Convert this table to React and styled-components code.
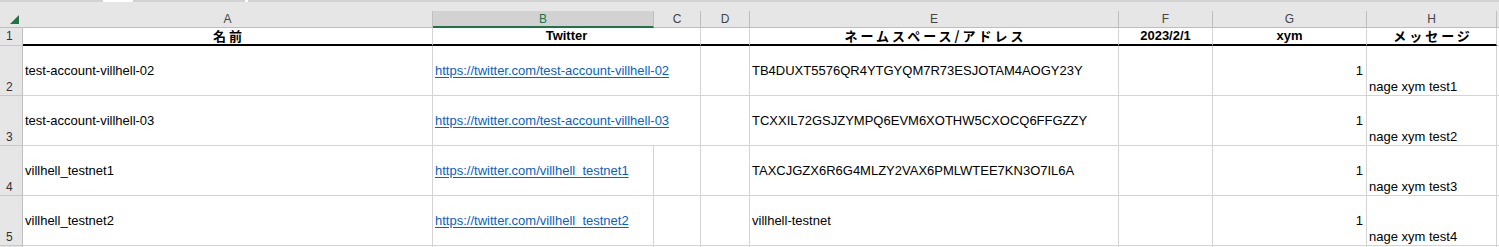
import React from "react";
import styled, { createGlobalStyle } from "styled-components";

const GlobalStyle = createGlobalStyle`
  html, body {
    margin: 0;
    padding: 0;
    background: #ffffff;
    overflow: hidden;
  }
  body {
    font-family: "Liberation Sans", Arial, "Noto Sans CJK JP", sans-serif;
  }
`;

const COLS = "23px 410px 221px 47px 49px 369px 94px 154px 130px 1fr";

const Frame = styled.div`
  width: 1499px;
  height: 247px;
  overflow: hidden;
  background: #ffffff;
`;

const TopStrip = styled.div`
  height: 11px;
  background: #e6e6e6;
  display: flex;
  align-items: flex-start;
`;

const StripPart = styled.div`
  height: 2px;
  width: ${(p) => p.$w}px;
  flex: ${(p) => (p.$grow ? 1 : "none")};
  background: ${(p) => (p.$gap ? "#ffffff" : "#d3d3d3")};
`;

const Sheet = styled.div`
  display: grid;
  grid-template-columns: ${COLS};
  grid-template-rows: 17px 18px repeat(4, 50px) 1fr;
  height: 236px;
  font-size: 13px;
  color: #000000;
`;

const Corner = styled.div`
  background: #e6e6e6;
  border-bottom: 1px solid #bdbdbd;
  border-right: 1px solid #e6e6e6;
  box-sizing: border-box;
  display: flex;
  align-items: flex-end;
  justify-content: flex-end;
  padding: 0 3px 3px 0;
`;

const CornerMark = styled.div`
  width: 0;
  height: 0;
  border-left: 9px solid transparent;
  border-bottom: 9px solid #217346;
`;

const ColHead = styled.div`
  box-sizing: border-box;
  background: ${(p) => (p.$active ? "#d2d2d2" : "#e6e6e6")};
  border-right: 1px solid #bfbfbf;
  border-bottom: ${(p) => (p.$active ? "2px solid #217346" : "1px solid #bdbdbd")};
  color: ${(p) => (p.$active ? "#217346" : "#444444")};
  font-size: 12px;
  display: flex;
  align-items: center;
  justify-content: center;
  line-height: 1;
  padding-top: ${(p) => (p.$active ? 1 : 0)}px;
`;

const RowHead = styled.div`
  box-sizing: border-box;
  background: #e6e6e6;
  border-right: 1px solid #bfbfbf;
  border-bottom: 1px solid #c8c8c8;
  font-size: 12px;
  color: #333333;
  display: flex;
  align-items: ${(p) => (p.$center ? "center" : "flex-end")};
  padding: 0 0 1px 6px;
  line-height: 14px;
`;

const Cell = styled.div`
  box-sizing: border-box;
  border-right: ${(p) => (p.$spill ? "none" : "1px solid #d4d4d4")};
  border-bottom: 1px solid #d4d4d4;
  display: flex;
  align-items: ${(p) => p.$valign || "center"};
  justify-content: ${(p) => p.$align || "flex-start"};
  padding: 0 3px 1px 2px;
  white-space: nowrap;
  overflow: visible;
  line-height: 15px;
  min-width: 0;
`;

const TitleCell = styled(Cell)`
  grid-column: span ${(p) => p.$span || 1};
  border-bottom: 2px solid #000000;
  justify-content: center;
  font-weight: bold;
  padding: 0;
  line-height: 16px;
`;

const Jp = styled.span`
  font-family: "Noto Sans CJK JP", "Liberation Sans", sans-serif;
  font-size: 13px;
  letter-spacing: 3px;
  margin-right: -3px;
  font-weight: bold;
`;

const SheetLink = styled.span`
  color: #0563c1;
  text-decoration: underline;
  text-underline-offset: 2px;
`;

const Tail = styled.div`
  border-bottom: 1px solid #d4d4d4;
  box-sizing: border-box;
`;

const HeadTail = styled.div`
  background: #e6e6e6;
  border-bottom: 1px solid #bdbdbd;
  box-sizing: border-box;
`;

const letters = ["A", "B", "C", "D", "E", "F", "G", "H"];

const rows = [
  {
    n: 2,
    name: "test-account-villhell-02",
    url: "https://twitter.com/test-account-villhell-02",
    addr: "TB4DUXT5576QR4YTGYQM7R73ESJOTAM4AOGY23Y",
    xym: 1,
    msg: "nage xym test1",
    spill: true,
  },
  {
    n: 3,
    name: "test-account-villhell-03",
    url: "https://twitter.com/test-account-villhell-03",
    addr: "TCXXIL72GSJZYMPQ6EVM6XOTHW5CXOCQ6FFGZZY",
    xym: 1,
    msg: "nage xym test2",
    spill: true,
  },
  {
    n: 4,
    name: "villhell_testnet1",
    url: "https://twitter.com/villhell_testnet1",
    addr: "TAXCJGZX6R6G4MLZY2VAX6PMLWTEE7KN3O7IL6A",
    xym: 1,
    msg: "nage xym test3",
    spill: false,
  },
  {
    n: 5,
    name: "villhell_testnet2",
    url: "https://twitter.com/villhell_testnet2",
    addr: "villhell-testnet",
    xym: 1,
    msg: "nage xym test4",
    spill: false,
  },
];

export default function App() {
  return (
    <Frame>
      <GlobalStyle />
      <TopStrip>
        <StripPart $w={103} />
        <StripPart $w={30} $gap />
        <StripPart $w={112} />
        <StripPart $w={3} $gap />
        <StripPart $grow />
      </TopStrip>
      <Sheet>
        <Corner>
          <CornerMark />
        </Corner>
        {letters.map((l) => (
          <ColHead key={l} $active={l === "B"}>
            {l}
          </ColHead>
        ))}
        <HeadTail />

        <RowHead $center>1</RowHead>
        <TitleCell>
          <Jp>名前</Jp>
        </TitleCell>
        <TitleCell $span={2}>Twitter</TitleCell>
        <TitleCell />
        <TitleCell>
          <Jp>ネームスペース/アドレス</Jp>
        </TitleCell>
        <TitleCell>2023/2/1</TitleCell>
        <TitleCell>xym</TitleCell>
        <TitleCell>
          <Jp>メッセージ</Jp>
        </TitleCell>
        <Tail />

        {rows.map((r) => (
          <React.Fragment key={r.n}>
            <RowHead>{r.n}</RowHead>
            <Cell>{r.name}</Cell>
            <Cell $spill={r.spill}>
              <SheetLink>{r.url}</SheetLink>
            </Cell>
            <Cell />
            <Cell />
            <Cell>{r.addr}</Cell>
            <Cell />
            <Cell $align="flex-end">{r.xym}</Cell>
            <Cell $valign="flex-end">{r.msg}</Cell>
            <Tail />
          </React.Fragment>
        ))}

        <RowHead />
        {letters.map((l) => (
          <Cell key={l} />
        ))}
        <Tail />
      </Sheet>
    </Frame>
  );
}
